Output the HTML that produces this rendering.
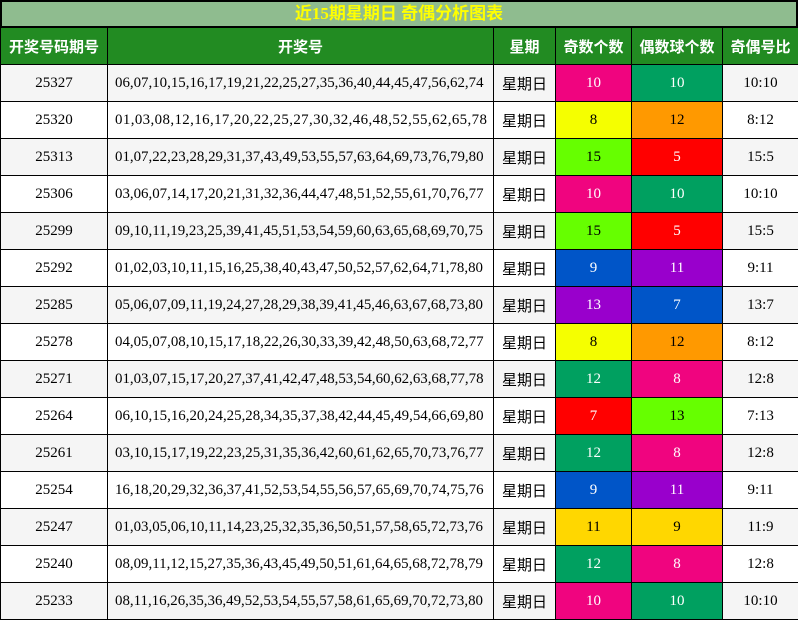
<!DOCTYPE html><html><head><meta charset="utf-8"><style>
*{margin:0;padding:0;box-sizing:border-box}
body{width:798px;height:620px;background:#fff;position:relative;overflow:hidden;font-family:"Liberation Serif","Noto Serif CJK SC",serif}
.t{position:absolute;left:0;top:0;width:798px;height:27px;background:#8fbc8f;border:2px solid #000;border-bottom:1px solid #000;color:#ffff00;font:bold 17px "Liberation Serif","Noto Sans CJK SC",sans-serif;text-align:center;line-height:24px}
table{position:absolute;left:0;top:27px;border-collapse:collapse;table-layout:fixed;width:798px}
td,th{border:1px solid #000;text-align:center;height:37px;padding:0;font-size:15px;line-height:36px;vertical-align:middle;white-space:nowrap;overflow:hidden}
th{background:#228b22;color:#fff;font:bold 15px/35px "Noto Sans CJK SC",sans-serif}
tr:nth-child(even) td{background:#f5f5f5}
td.w{font-family:"Noto Sans CJK SC",sans-serif;font-size:15px;line-height:35px}
td.n{font-size:14.9px;text-align:left;padding-left:7px;letter-spacing:0}
</style></head><body>
<div class="t">近15期星期日 奇偶分析图表</div>
<table>
<colgroup><col style="width:107px"><col style="width:386px"><col style="width:62px"><col style="width:76px"><col style="width:91px"><col style="width:76px"></colgroup>
<tr><th>开奖号码期号</th><th>开奖号</th><th>星期</th><th>奇数个数</th><th>偶数球个数</th><th>奇偶号比</th></tr>
<tr><td>25327</td><td class="n">06,07,10,15,16,17,19,21,22,25,27,35,36,40,44,45,47,56,62,74</td><td class="w">星期日</td><td style="background:#f0047f!important;color:#fff">10</td><td style="background:#00a060!important;color:#fff">10</td><td>10:10</td></tr>
<tr><td>25320</td><td class="n" style="letter-spacing:0.4px">01,03,08,12,16,17,20,22,25,27,30,32,46,48,52,55,62,65,78</td><td class="w">星期日</td><td style="background:#f5ff00!important">8</td><td style="background:#ff9900!important">12</td><td>8:12</td></tr>
<tr><td>25313</td><td class="n">01,07,22,23,28,29,31,37,43,49,53,55,57,63,64,69,73,76,79,80</td><td class="w">星期日</td><td style="background:#66ff00!important">15</td><td style="background:#ff0000!important;color:#fff">5</td><td>15:5</td></tr>
<tr><td>25306</td><td class="n">03,06,07,14,17,20,21,31,32,36,44,47,48,51,52,55,61,70,76,77</td><td class="w">星期日</td><td style="background:#f0047f!important;color:#fff">10</td><td style="background:#00a060!important;color:#fff">10</td><td>10:10</td></tr>
<tr><td>25299</td><td class="n">09,10,11,19,23,25,39,41,45,51,53,54,59,60,63,65,68,69,70,75</td><td class="w">星期日</td><td style="background:#66ff00!important">15</td><td style="background:#ff0000!important;color:#fff">5</td><td>15:5</td></tr>
<tr><td>25292</td><td class="n">01,02,03,10,11,15,16,25,38,40,43,47,50,52,57,62,64,71,78,80</td><td class="w">星期日</td><td style="background:#0055c8!important;color:#fff">9</td><td style="background:#9900cc!important;color:#fff">11</td><td>9:11</td></tr>
<tr><td>25285</td><td class="n">05,06,07,09,11,19,24,27,28,29,38,39,41,45,46,63,67,68,73,80</td><td class="w">星期日</td><td style="background:#9900cc!important;color:#fff">13</td><td style="background:#0055c8!important;color:#fff">7</td><td>13:7</td></tr>
<tr><td>25278</td><td class="n">04,05,07,08,10,15,17,18,22,26,30,33,39,42,48,50,63,68,72,77</td><td class="w">星期日</td><td style="background:#f5ff00!important">8</td><td style="background:#ff9900!important">12</td><td>8:12</td></tr>
<tr><td>25271</td><td class="n">01,03,07,15,17,20,27,37,41,42,47,48,53,54,60,62,63,68,77,78</td><td class="w">星期日</td><td style="background:#00a060!important;color:#fff">12</td><td style="background:#f0047f!important;color:#fff">8</td><td>12:8</td></tr>
<tr><td>25264</td><td class="n">06,10,15,16,20,24,25,28,34,35,37,38,42,44,45,49,54,66,69,80</td><td class="w">星期日</td><td style="background:#ff0000!important;color:#fff">7</td><td style="background:#66ff00!important">13</td><td>7:13</td></tr>
<tr><td>25261</td><td class="n">03,10,15,17,19,22,23,25,31,35,36,42,60,61,62,65,70,73,76,77</td><td class="w">星期日</td><td style="background:#00a060!important;color:#fff">12</td><td style="background:#f0047f!important;color:#fff">8</td><td>12:8</td></tr>
<tr><td>25254</td><td class="n">16,18,20,29,32,36,37,41,52,53,54,55,56,57,65,69,70,74,75,76</td><td class="w">星期日</td><td style="background:#0055c8!important;color:#fff">9</td><td style="background:#9900cc!important;color:#fff">11</td><td>9:11</td></tr>
<tr><td>25247</td><td class="n">01,03,05,06,10,11,14,23,25,32,35,36,50,51,57,58,65,72,73,76</td><td class="w">星期日</td><td style="background:#ffd700!important">11</td><td style="background:#ffd700!important">9</td><td>11:9</td></tr>
<tr><td>25240</td><td class="n">08,09,11,12,15,27,35,36,43,45,49,50,51,61,64,65,68,72,78,79</td><td class="w">星期日</td><td style="background:#00a060!important;color:#fff">12</td><td style="background:#f0047f!important;color:#fff">8</td><td>12:8</td></tr>
<tr><td>25233</td><td class="n">08,11,16,26,35,36,49,52,53,54,55,57,58,61,65,69,70,72,73,80</td><td class="w">星期日</td><td style="background:#f0047f!important;color:#fff">10</td><td style="background:#00a060!important;color:#fff">10</td><td>10:10</td></tr>
</table>
</body></html>
